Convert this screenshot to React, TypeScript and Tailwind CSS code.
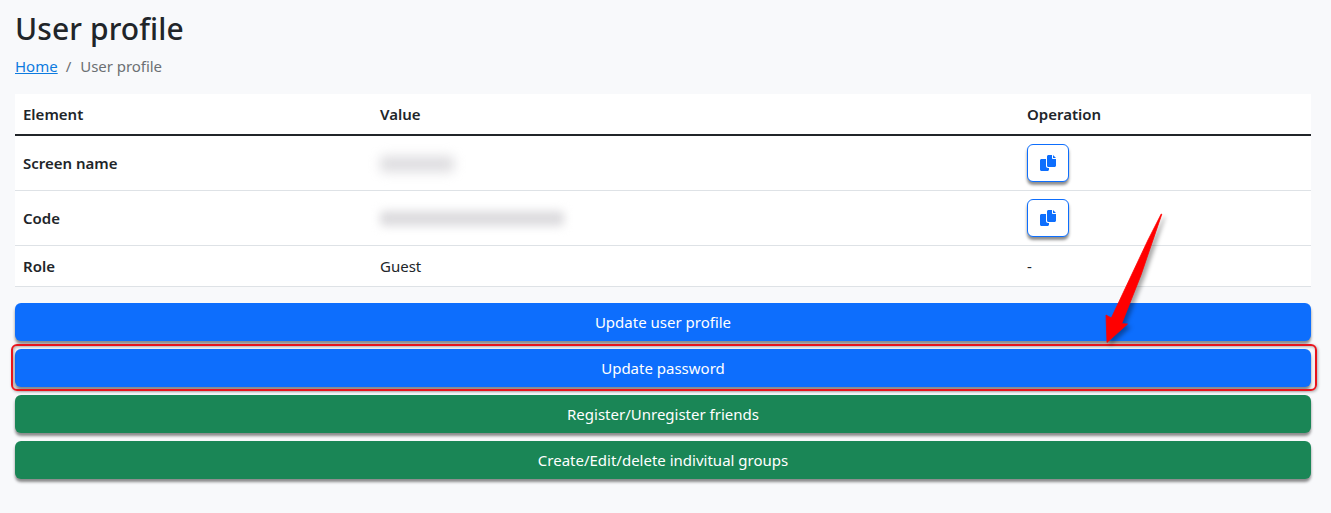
import type { ReactNode } from "react";

function CopyIcon() {
  return (
    <svg viewBox="0 0 512 512" className="size-4" fill="currentColor" aria-hidden="true">
      <path d="M384 96L384 0h-112c-26.51 0-48 21.49-48 48v288c0 26.51 21.49 48 48 48H464c26.51 0 48-21.49 48-48V128h-95.1C398.4 128 384 113.6 384 96zM416 0v96h96L416 0zM192 352V128h-144c-26.51 0-48 21.49-48 48v288c0 26.51 21.49 48 48 48h192c26.51 0 48-21.49 48-48L288 416h-32C220.7 416 192 387.3 192 352z" />
    </svg>
  );
}

function CopyButton() {
  return (
    <button
      type="button"
      aria-label="Copy"
      className="flex h-[38px] w-[42px] items-center justify-center rounded-md border border-[#0d6efd] bg-white text-[#0d6efd] shadow-[0_3px_3px_rgba(0,0,0,0.45)]"
    >
      <CopyIcon />
    </button>
  );
}

function Row({ label, value, operation }: { label: string; value: ReactNode; operation: ReactNode }) {
  return (
    <tr className="border-b border-[#dee2e6]">
      <th className="p-2 text-left align-middle font-semibold">{label}</th>
      <td className="p-2 align-middle">{value}</td>
      <td className="p-2 align-middle">{operation}</td>
    </tr>
  );
}

function ActionButton({ children, color }: { children: ReactNode; color: "blue" | "green" }) {
  return (
    <button
      type="button"
      className={`flex h-[38px] w-full items-center justify-center rounded-md text-white shadow-[0_3px_3px_rgba(0,0,0,0.45)] ${
        color === "blue" ? "bg-[#0d6efd]" : "bg-[#1a8656]"
      }`}
    >
      {children}
    </button>
  );
}

function Arrow() {
  return (
    <svg
      viewBox="0 0 80 150"
      className="pointer-events-none absolute left-[1095px] top-[205px] h-[150px] w-20 drop-shadow-[3px_3px_2px_rgba(0,0,0,0.35)]"
      aria-hidden="true"
    >
      <path
        d="M66.2 9 L53 35 L16.3 113 L11 110 L12 137.5 L32.5 119 L26.7 118.7 L46 70 L66.8 9.2 Z"
        fill="#ff0000"
        stroke="#ff0000"
        strokeWidth="0.8"
        strokeLinejoin="round"
      />
    </svg>
  );
}

export default function App() {
  return (
    <main className="relative h-[513px] w-full overflow-hidden bg-[#f8f9fb] pl-[15px] pr-5 pt-[10px] font-['Noto_Sans','Open_Sans',sans-serif] text-[15px] leading-6 text-[#212529]">
      <h1 className="text-[30px] font-medium leading-[38px] tracking-[0.1px]">User profile</h1>
      <nav className="mt-[6px] flex gap-2 text-[15px]">
        <a href="#" className="text-[#0d7bdf] underline">Home</a>
        <span className="text-[#6c7073]">/</span>
        <span className="ml-px tracking-[-0.05px] text-[#6c7073]">User profile</span>
      </nav>
      <table className="mt-4 w-full table-fixed border-collapse bg-white">
        <colgroup>
          <col className="w-[357px]" />
          <col className="w-[647px]" />
          <col />
        </colgroup>
        <thead>
          <tr className="border-b-2 border-[#212529] text-left">
            <th className="p-2 font-semibold">Element</th>
            <th className="p-2 font-semibold">Value</th>
            <th className="p-2 font-semibold">Operation</th>
          </tr>
        </thead>
        <tbody>
          <Row
            label="Screen name"
            value={<div className="mt-0.5 h-4 w-[74px] rounded bg-[#dedde0] blur-[6px]" />}
            operation={<CopyButton />}
          />
          <Row
            label="Code"
            value={<div className="h-[15px] w-[184px] rounded bg-[#dcdbde] blur-[5px]" />}
            operation={<CopyButton />}
          />
          <Row label="Role" value="Guest" operation="-" />
        </tbody>
      </table>
      <div className="mt-4 flex flex-col gap-2">
        <ActionButton color="blue">Update user profile</ActionButton>
        <div className="relative">
          <ActionButton color="blue">Update password</ActionButton>
          <div className="pointer-events-none absolute -bottom-1 -left-1 -right-[6px] -top-[5px] rounded-md border-2 border-[#e8141c] shadow-[1px_1px_3px_rgba(0,0,0,0.3),inset_1px_1px_3px_rgba(0,0,0,0.3)]" />
        </div>
        <ActionButton color="green">Register/Unregister friends</ActionButton>
        <ActionButton color="green">Create/Edit/delete indivitual groups</ActionButton>
      </div>
      <Arrow />
    </main>
  );
}
